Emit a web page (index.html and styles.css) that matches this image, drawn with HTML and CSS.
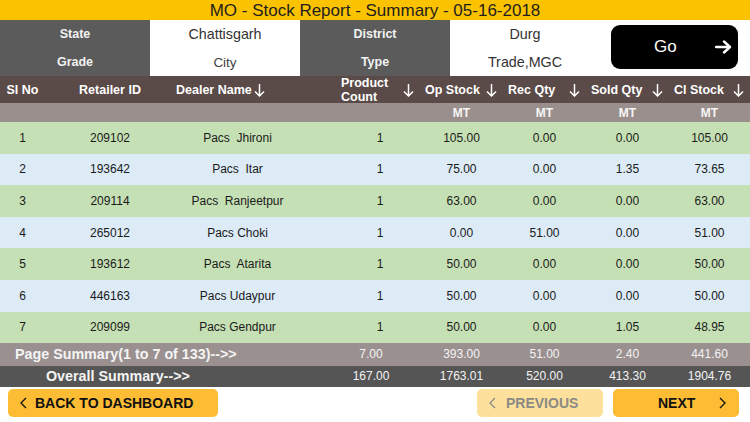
FILE: index.html
```html
<!DOCTYPE html>
<html lang="en">
<head>
  <meta charset="UTF-8" />
  <title>MO - Stock Report - Summary</title>
  <link rel="stylesheet" href="styles.css">
</head>
<body>

  <div class="title">MO - Stock Report - Summary - 05-16-2018</div>

  <div class="filters">
    <div class="f-label">State</div>
    <div class="f-value">Chattisgarh</div>
    <div class="f-label">District</div>
    <div class="f-value">Durg</div>
    <div class="go-cell">
      <div class="go-btn">
        <span>Go</span>
        <svg class="go-arrow" width="17" height="14" viewBox="0 0 17 14"><path d="M1 7 H15 M9 1.5 L15 7 L9 12.5" fill="none" stroke="#fff" stroke-width="2.4" stroke-linecap="round" stroke-linejoin="round"/></svg>
      </div>
    </div>
    <div class="f-label">Grade</div>
    <div class="f-value small">City</div>
    <div class="f-label">Type</div>
    <div class="f-value">Trade,MGC</div>
  </div>

  <div class="report">
    <div class="row head">
      <div class="c">Sl No</div>
      <div class="c">Retailer ID</div>
      <div class="c dealer-h">Dealer Name<svg class="down" width="11" height="14" viewBox="0 0 11 14"><path d="M5.5 1 V13 M1 8.5 L5.5 13 L10 8.5" fill="none" stroke="#fff" stroke-width="1.5"/></svg></div>
      <div class="c sort"><span class="two">Product<br>Count</span><svg class="down" width="11" height="14" viewBox="0 0 11 14"><path d="M5.5 1 V13 M1 8.5 L5.5 13 L10 8.5" fill="none" stroke="#fff" stroke-width="1.5"/></svg></div>
      <div class="c sort"><span>Op Stock</span><svg class="down" width="11" height="14" viewBox="0 0 11 14"><path d="M5.5 1 V13 M1 8.5 L5.5 13 L10 8.5" fill="none" stroke="#fff" stroke-width="1.5"/></svg></div>
      <div class="c sort"><span>Rec Qty</span><svg class="down" width="11" height="14" viewBox="0 0 11 14"><path d="M5.5 1 V13 M1 8.5 L5.5 13 L10 8.5" fill="none" stroke="#fff" stroke-width="1.5"/></svg></div>
      <div class="c sort"><span>Sold Qty</span><svg class="down" width="11" height="14" viewBox="0 0 11 14"><path d="M5.5 1 V13 M1 8.5 L5.5 13 L10 8.5" fill="none" stroke="#fff" stroke-width="1.5"/></svg></div>
      <div class="c sort"><span>Cl Stock</span><svg class="down" width="11" height="14" viewBox="0 0 11 14"><path d="M5.5 1 V13 M1 8.5 L5.5 13 L10 8.5" fill="none" stroke="#fff" stroke-width="1.5"/></svg></div>
    </div>

    <div class="row units">
      <div></div><div></div><div></div><div></div>
      <div class="c">MT</div>
      <div class="c">MT</div>
      <div class="c">MT</div>
      <div class="c">MT</div>
    </div>

    <div class="row item green">
      <div class="c">1</div><div class="c">209102</div><div class="c dealer">Pacs&nbsp; Jhironi</div><div class="c">1</div>
      <div class="c">105.00</div><div class="c">0.00</div><div class="c">0.00</div><div class="c">105.00</div>
    </div>
    <div class="row item blue">
      <div class="c">2</div><div class="c">193642</div><div class="c dealer">Pacs&nbsp; Itar</div><div class="c">1</div>
      <div class="c">75.00</div><div class="c">0.00</div><div class="c">1.35</div><div class="c">73.65</div>
    </div>
    <div class="row item green">
      <div class="c">3</div><div class="c">209114</div><div class="c dealer">Pacs&nbsp; Ranjeetpur</div><div class="c">1</div>
      <div class="c">63.00</div><div class="c">0.00</div><div class="c">0.00</div><div class="c">63.00</div>
    </div>
    <div class="row item blue">
      <div class="c">4</div><div class="c">265012</div><div class="c dealer">Pacs Choki</div><div class="c">1</div>
      <div class="c">0.00</div><div class="c">51.00</div><div class="c">0.00</div><div class="c">51.00</div>
    </div>
    <div class="row item green">
      <div class="c">5</div><div class="c">193612</div><div class="c dealer">Pacs&nbsp; Atarita</div><div class="c">1</div>
      <div class="c">50.00</div><div class="c">0.00</div><div class="c">0.00</div><div class="c">50.00</div>
    </div>
    <div class="row item blue">
      <div class="c">6</div><div class="c">446163</div><div class="c dealer">Pacs Udaypur</div><div class="c">1</div>
      <div class="c">50.00</div><div class="c">0.00</div><div class="c">0.00</div><div class="c">50.00</div>
    </div>
    <div class="row item green">
      <div class="c">7</div><div class="c">209099</div><div class="c dealer">Pacs Gendpur</div><div class="c">1</div>
      <div class="c">50.00</div><div class="c">0.00</div><div class="c">1.05</div><div class="c">48.95</div>
    </div>

    <div class="row summary page">
      <div class="s-label">Page Summary(1 to 7 of 133)--&gt;&gt;</div>
      <div class="c pc">7.00</div><div class="c">393.00</div><div class="c">51.00</div><div class="c">2.40</div><div class="c">441.60</div>
    </div>
    <div class="row summary overall">
      <div class="s-label">Overall Summary--&gt;&gt;</div>
      <div class="c pc">167.00</div><div class="c">1763.01</div><div class="c">520.00</div><div class="c">413.30</div><div class="c">1904.76</div>
    </div>
  </div>

  <div class="footer">
    <button class="btn back">
      <svg class="chev" width="7" height="12" viewBox="0 0 7 12"><path d="M6 1 L1 6 L6 11" fill="none" stroke="#111" stroke-width="1.3"/></svg>
      BACK TO DASHBOARD
    </button>
    <button class="btn prev">
      <svg class="chev" width="7" height="12" viewBox="0 0 7 12"><path d="M6 1 L1 6 L6 11" fill="none" stroke="#8c8a86" stroke-width="1.3"/></svg>
      PREVIOUS
    </button>
    <button class="btn next">
      <span>NEXT</span>
      <svg class="chev right" width="7" height="12" viewBox="0 0 7 12"><path d="M1 1 L6 6 L1 11" fill="none" stroke="#111" stroke-width="1.3"/></svg>
    </button>
  </div>

</body>
</html>
```

FILE: styles.css
```css
* { box-sizing: border-box; }

body {
  margin: 0;
  width: 750px;
  font-family: 'Liberation Sans', Arial, Helvetica, sans-serif;
  background: #fff;
  color: #1c1c1c;
}

.title {
  height: 20px;
  line-height: 21px;
  background: #fbc200;
  color: #1e1e1e;
  font-size: 17px;
  text-align: center;
}

/* filter block */
.filters {
  display: grid;
  grid-template-columns: repeat(5, 150px);
  grid-template-rows: 28px 28px;
}

.f-label {
  background: #5b5b5b;
  color: #f2f2f2;
  font-weight: bold;
  font-size: 12.5px;
  display: flex;
  align-items: center;
  justify-content: center;
}

.f-value {
  color: #333;
  font-size: 14.3px;
  display: flex;
  align-items: center;
  justify-content: center;
}

.f-value.small {
  font-size: 13.5px;
  color: #444;
}

.go-cell {
  grid-column: 5;
  grid-row: 1 / 3;
  display: flex;
  padding: 5px 12px 7px 11px;
}

.go-btn {
  flex: 1;
  display: flex;
  align-items: center;
  background: #000;
  color: #fff;
  border-radius: 9px;
  font-size: 17px;
  padding: 0 6px 0 43px;
}

.go-arrow {
  margin-left: auto;
}

/* table */
.row {
  display: grid;
  grid-template-columns: 45px 130px 165px 80px 83px 83px 83px 81px;
}

.c {
  display: flex;
  align-items: center;
  justify-content: center;
}

.head {
  height: 27px;
  background: #5a4a48;
  color: #fff;
  font-weight: bold;
  font-size: 12.5px;
}

.head .dealer-h {
  justify-content: flex-start;
  padding-left: 1px;
}

.head .dealer-h .down {
  margin-left: 2px;
}

.head .sort {
  justify-content: space-between;
  padding: 0 6px 0 5px;
}

.head .sort:nth-child(4) {
  padding-left: 1px;
}

.two {
  line-height: 14px;
}

.units {
  height: 19px;
  background: #9a8f8d;
  color: #f6f6f6;
  font-weight: bold;
  font-size: 12px;
}

.item {
  height: 31.6px;
  font-size: 12px;
  color: #1a1a1a;
}

.item.green { background: #c6e0b5; }
.item.blue { background: #dcebf6; }

.item .dealer {
  padding-right: 40px;
}

.summary {
  color: #f4f4f4;
  font-size: 12px;
}

.summary .s-label {
  grid-column: 1 / 4;
  display: flex;
  align-items: center;
  font-weight: bold;
  font-size: 14.3px;
}

.summary .pc {
  padding-right: 18px;
}

.page {
  height: 22.5px;
  background: #9a9090;
}

.page .s-label { padding-left: 15px; }

.overall {
  height: 21px;
  background: #555;
}

.overall .s-label { padding-left: 46px; }

/* bottom buttons */
.footer {
  display: flex;
  padding: 2px 11px 0 8px;
}

.btn {
  height: 28px;
  border: none;
  border-radius: 5px;
  font-family: inherit;
  font-weight: bold;
  font-size: 14px;
  display: flex;
  align-items: center;
  padding: 0;
  cursor: pointer;
}

.back {
  width: 210px;
  background: #fcbd35;
  color: #111;
  padding-left: 12px;
}

.back .chev { margin-right: 8px; }

.prev {
  width: 126px;
  margin-left: auto;
  background: #fde09b;
  color: #8c8a86;
  padding-left: 12px;
}

.prev .chev { margin-right: 10px; }

.next {
  width: 126px;
  margin-left: 10px;
  background: #fcbd35;
  color: #111;
  padding: 0 13px 0 45px;
}

.next .chev { margin-left: auto; }
```
